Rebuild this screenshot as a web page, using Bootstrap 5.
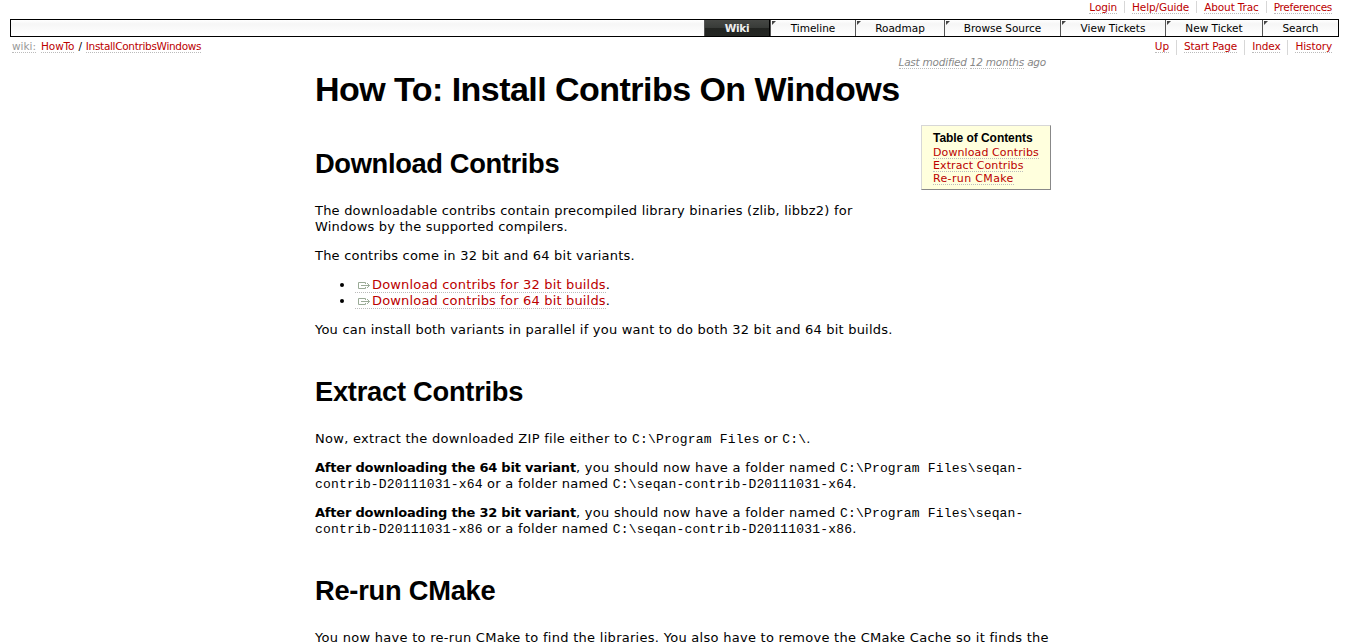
<!DOCTYPE html>
<html lang="en">
<head>
<meta charset="utf-8">
<title>HowTo/InstallContribsWindows</title>
<link href="https://cdn.jsdelivr.net/npm/bootstrap@5.3.0/dist/css/bootstrap.min.css" rel="stylesheet">
<style>
body { font: 13px/16px "DejaVu Sans", sans-serif; color: #000; background: #fff; height: 643px; overflow: hidden; }
a { color: #b00; text-decoration: none; border-bottom: 1px dotted #bbb; }
a:hover { color: #555; }
.subnav { font-size: 10.5px; line-height: 12px; letter-spacing: -.12px; }
.subnav li { line-height: 12px; }
.subnav li + li { border-left: 1px solid #d7d7d7; margin-left: 7px; padding-left: 7px; }
.subnav .tight { letter-spacing: -.32px; }
.topnav { height: 19px; padding: 1px 17px 0 0; }
.mainnav { height: 18px; margin: 0 10px; border: 1px solid #000; background: linear-gradient(#fff, #f6f6f6 25%, #fff 95%); font-size: 10.5px; line-height: 17px; }
.mainnav a { color: #000; border: 0; display: block; text-align: center; height: 16px; }
.mainnav li { border-left: 1px solid #555; position: relative; flex: none; }
.mainnav li:not(.current)::before { content: ""; position: absolute; left: 1px; top: 1px; border-top: 4px solid #444; border-right: 4px solid transparent; }
.mainnav .current { background: linear-gradient(#464845, #383b38 48%, #222421 52%, #252724); border-right: 1px solid #000; }
.mainnav .current a { color: #eee; font-weight: 700; letter-spacing: -.3px; }
.w-wiki { width: 66px; } .w-time { width: 85px; } .w-road { width: 89px; } .w-src { width: 116px; }
.w-view { width: 105px; } .w-new { width: 97px; } .w-find { width: 76px; }
.ctxnav { height: 18px; padding: 3px 17px 0 12px; }
.pathhead { color: #999; border-bottom: 1px dotted #bbb; margin-right: 5px; letter-spacing: 0; }
.wikipage { width: 736px; margin-left: 315px; white-space: nowrap; }
.modified { font-size: 10.5px; line-height: 14px; color: #888; font-style: italic; padding-right: 5px; letter-spacing: -.23px; }
.modified a { color: #888; }
h1, h2 { font-family: "Liberation Sans", Arial, sans-serif; font-weight: 700; }
h1 { font-size: 34px; line-height: 40px; margin: 0; letter-spacing: -.54px; }
h2 { font-size: 27.3px; line-height: 30px; margin: 39px 0 24px; letter-spacing: -.26px; }
h1 ~ h2.first { margin-top: 40px; letter-spacing: -.35px; }
.wikipage p { margin: 0 0 13px; letter-spacing: .21px; }
.wikipage p.wide { letter-spacing: .28px; }
.wikipage p b { letter-spacing: -.21px; }
.wikipage ul.links { margin: 0 0 13px; padding-left: 40px; letter-spacing: .17px; }
.links svg { display: inline-block; vertical-align: -1px; margin: 0 2px 0 2px; }
code { font: 13px/16px "Liberation Mono", "Courier New", monospace; color: #000; line-height: 1; letter-spacing: .18px; }
.toc { width: 130px; height: 65px; margin: 16px 0 0; background: #ffd; border: 1px solid; border-color: #d7d7d7 #888 #888 #d7d7d7; padding: 6px 11px; font-size: 11px; line-height: 13px; }
.toc h4 { font: 700 12px/13px "Liberation Sans", Arial, sans-serif; margin: 0 0 1px; letter-spacing: -.05px; }
.toc li { height: 13px; letter-spacing: .1px; }
.toc li:last-child { letter-spacing: .35px; }
.toc a { display: inline-block; height: 13px; line-height: 14px; }
</style>
</head>
<body>
<header>
  <nav class="subnav topnav">
    <ul class="list-unstyled d-flex justify-content-end m-0">
      <li><a href="#">Login</a></li><li><a href="#">Help/Guide</a></li><li><a href="#">About Trac</a></li><li class="tight"><a href="#">Preferences</a></li>
    </ul>
  </nav>
  <nav class="mainnav">
    <ul class="list-unstyled d-flex justify-content-end m-0">
      <li class="current w-wiki"><a href="#">Wiki</a></li>
      <li class="w-time"><a href="#">Timeline</a></li>
      <li class="w-road"><a href="#">Roadmap</a></li>
      <li class="w-src"><a href="#">Browse Source</a></li>
      <li class="w-view"><a href="#">View Tickets</a></li>
      <li class="w-new"><a href="#">New Ticket</a></li>
      <li class="w-find"><a href="#">Search</a></li>
    </ul>
  </nav>
  <div class="subnav ctxnav d-flex justify-content-between">
    <div><span class="pathhead">wiki:</span><a href="#">HowTo</a><span class="mx-1">/</span><a class="tight" href="#">InstallContribsWindows</a></div>
    <ul class="list-unstyled d-flex m-0">
      <li><a href="#">Up</a></li><li><a href="#">Start Page</a></li><li><a href="#">Index</a></li><li><a href="#">History</a></li>
    </ul>
  </div>
</header>
<main class="wikipage">
  <div class="modified text-end"><a href="#">Last modified</a> <a href="#">12 months</a> ago</div>
  <h1>How To: Install Contribs On Windows</h1>
  <aside class="toc float-end">
    <h4>Table of Contents</h4>
    <ul class="list-unstyled m-0">
      <li><a href="#">Download Contribs</a></li>
      <li><a href="#">Extract Contribs</a></li>
      <li><a href="#">Re-run CMake</a></li>
    </ul>
  </aside>
  <h2 class="first">Download Contribs</h2>
  <p>The downloadable contribs contain precompiled library binaries (zlib, libbz2) for<br>Windows by the supported compilers.</p>
  <p>The contribs come in 32 bit and 64 bit variants.</p>
  <ul class="links">
    <li><a href="#"><svg width="13" height="9" viewBox="0 0 13 9" fill="none" stroke="#9aaa96"><path d="M8.5 3V1.5H1.5V7.5H8.5V6M4 4.5H12.5M10 2L12.5 4.5L10 7"/></svg>Download contribs for 32 bit builds</a>.</li>
    <li><a href="#"><svg width="13" height="9" viewBox="0 0 13 9" fill="none" stroke="#9aaa96"><path d="M8.5 3V1.5H1.5V7.5H8.5V6M4 4.5H12.5M10 2L12.5 4.5L10 7"/></svg>Download contribs for 64 bit builds</a>.</li>
  </ul>
  <p>You can install both variants in parallel if you want to do both 32 bit and 64 bit builds.</p>
  <h2>Extract Contribs</h2>
  <p class="wide">Now, extract the downloaded ZIP file either to <code>C:\Program Files</code> or <code>C:\</code>.</p>
  <p class="wide"><b>After downloading the 64 bit variant</b>, you should now have a folder named <code>C:\Program Files\seqan-<br>contrib-D20111031-x64</code> or a folder named <code>C:\seqan-contrib-D20111031-x64</code>.</p>
  <p class="wide"><b>After downloading the 32 bit variant</b>, you should now have a folder named <code>C:\Program Files\seqan-<br>contrib-D20111031-x86</code> or a folder named <code>C:\seqan-contrib-D20111031-x86</code>.</p>
  <h2>Re-run CMake</h2>
  <p class="wide">You now have to re-run CMake to find the libraries. You also have to remove the CMake Cache so it finds the</p>
</main>
<script src="https://cdn.jsdelivr.net/npm/bootstrap@5.3.0/dist/js/bootstrap.bundle.min.js"></script>
</body>
</html>
